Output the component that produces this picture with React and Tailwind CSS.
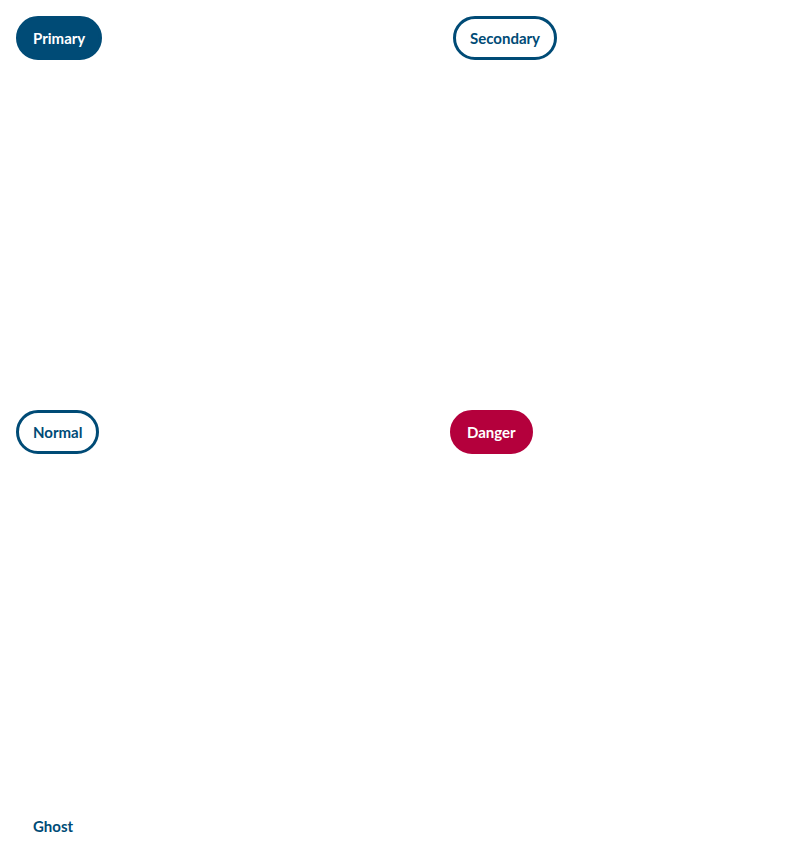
const base =
  'h-11 inline-flex items-center rounded-full border-[3px] px-[14px] pt-px text-[15px] font-bold leading-none'

export default function App() {
  return (
    <div className="min-h-[864px] bg-white p-4 font-['Lato','Noto_Sans',sans-serif]">
      <div className="grid grid-cols-[434px_1fr] grid-rows-[394px_394px_44px]">
        <div>
          <button className={`${base} border-[#004b76] bg-[#004b76] text-white`}>Primary</button>
        </div>
        <div>
          <button className={`${base} ml-[3px] border-[#004b76] bg-white text-[#004b76]`}>Secondary</button>
        </div>
        <div>
          <button className={`${base} border-[#004b76] bg-white text-[#004b76]`}>Normal</button>
        </div>
        <div>
          <button className={`${base} border-[#b4003c] bg-[#b4003c] text-white`}>Danger</button>
        </div>
        <div>
          <button className={`${base} border-transparent bg-transparent text-[#004b76]`}>Ghost</button>
        </div>
      </div>
    </div>
  )
}
